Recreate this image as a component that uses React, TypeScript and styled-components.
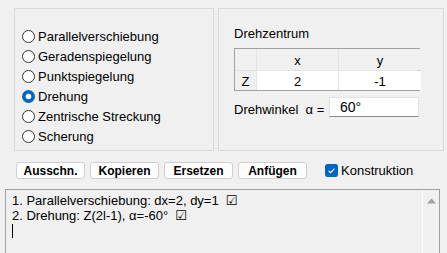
import React from "react";
import styled, { createGlobalStyle } from "styled-components";

const GlobalStyle = createGlobalStyle`
  html, body {
    margin: 0;
    padding: 0;
    background: #f0f0f0;
  }
  body {
    font-family: "Liberation Sans", Arial, sans-serif;
    font-size: 13px;
    color: #000;
  }
`;

const Page = styled.div`
  width: 447px;
  height: 253px;
  overflow: hidden;
  background: #f0f0f0;
  padding-top: 8px;
  box-sizing: border-box;
`;

const TopRow = styled.div`
  display: flex;
  gap: 4px;
  padding-left: 14px;
`;

const Panel = styled.div<{ $width: number }>`
  width: ${({ $width }) => $width}px;
  height: 143px;
  box-sizing: border-box;
  border: 1px solid #dadada;
`;

const RadioList = styled.div`
  display: flex;
  flex-direction: column;
  padding: 17px 0 0 7px;
`;

const RadioRow = styled.label`
  display: flex;
  align-items: center;
  gap: 3px;
  height: 20px;
  line-height: 15px;
`;

const RightInner = styled.div`
  display: flex;
  flex-direction: column;
  padding: 17px 0 0 15px;
`;

const Caption = styled.div`
  line-height: 15px;
  height: 15px;
`;

const Table = styled.div`
  margin-top: 7px;
  width: 186px;
  box-sizing: border-box;
  border: 1px solid #a0a0a0;
  display: grid;
  grid-template-columns: 21px 81px 82px;
  grid-template-rows: 21px 19px;
  background: #e3e3e3;
  gap: 1px 1px;
`;

const Cell = styled.div<{ $head?: boolean }>`
  background: ${({ $head }) => ($head ? "#f0f0f0" : "#ffffff")};
  display: flex;
  align-items: center;
  justify-content: center;
  font-size: 13px;
  padding-top: 1px;
`;

const AngleRow = styled.div`
  display: flex;
  align-items: center;
  margin-top: 6px;
`;

const AngleLabel = styled.span`
  width: 95px;
  white-space: pre;
  padding-top: 5px;
`;

const AngleInput = styled.div`
  width: 90px;
  height: 20px;
  box-sizing: border-box;
  background: #fff;
  border: 1px solid #e2e2e2;
  border-bottom: 1px solid #8c8c8c;
  padding-left: 10px;
  line-height: 18px;
  font-size: 14px;
`;

const ButtonRow = styled.div`
  display: flex;
  align-items: center;
  margin-top: 11px;
  padding-left: 16px;
  gap: 5px;
`;

const Button = styled.div`
  width: 69px;
  height: 17px;
  box-sizing: border-box;
  background: #fdfdfd;
  border: 1px solid #d0d0d0;
  border-radius: 3px;
  font-weight: bold;
  font-size: 12px;
  display: flex;
  align-items: center;
  justify-content: center;
`;

const CheckLabel = styled.label`
  display: flex;
  align-items: center;
  gap: 3px;
  margin-left: 13px;
`;

const Editor = styled.div`
  margin: 10px 0 0 5px;
  width: 435px;
  height: 80px;
  box-sizing: border-box;
  border: 1px solid #9f9f9f;
  border-bottom: none;
  display: flex;
  background: #f0f0f0;
`;

const EditorText = styled.div`
  flex: 1;
  padding: 3px 0 0 6px;
  line-height: 15px;
  font-size: 13px;
`;

const Line = styled.div`
  white-space: pre;
`;

const Tick = styled.span`
  font-family: "DejaVu Sans", sans-serif;
  font-size: 13px;
  margin-left: 7px;
`;

const Caret = styled.div`
  width: 1px;
  height: 14px;
  margin-top: 1px;
  background: #000;
`;

const Scrollbar = styled.div`
  width: 16px;
  border-left: 1px solid #fbfbfb;
  display: flex;
  justify-content: center;
  padding-top: 8px;
`;

const Radio = ({ checked }: { checked?: boolean }) => (
  <svg width="13" height="13" viewBox="0 0 13 13">
    {checked ? (
      <>
        <circle cx="6.5" cy="6.5" r="6.5" fill="#0067c0" />
        <circle cx="6.5" cy="6.5" r="2.8" fill="#fff" />
      </>
    ) : (
      <circle cx="6.5" cy="6.5" r="6" fill="#fff" stroke="#333" strokeWidth="1" />
    )}
  </svg>
);

const options = [
  "Parallelverschiebung",
  "Geradenspiegelung",
  "Punktspiegelung",
  "Drehung",
  "Zentrische Streckung",
  "Scherung",
];

export default function App() {
  return (
    <Page>
      <GlobalStyle />
      <TopRow>
        <Panel $width={200}>
          <RadioList>
            {options.map((o) => (
              <RadioRow key={o}>
                <Radio checked={o === "Drehung"} />
                {o}
              </RadioRow>
            ))}
          </RadioList>
        </Panel>
        <Panel $width={226}>
          <RightInner>
            <Caption>Drehzentrum</Caption>
            <Table>
              <Cell $head />
              <Cell $head>x</Cell>
              <Cell $head>y</Cell>
              <Cell $head>Z</Cell>
              <Cell>2</Cell>
              <Cell>-1</Cell>
            </Table>
            <AngleRow>
              <AngleLabel>{"Drehwinkel  α ="}</AngleLabel>
              <AngleInput>60°</AngleInput>
            </AngleRow>
          </RightInner>
        </Panel>
      </TopRow>
      <ButtonRow>
        <Button>Ausschn.</Button>
        <Button>Kopieren</Button>
        <Button>Ersetzen</Button>
        <Button>Anfügen</Button>
        <CheckLabel>
          <svg width="13" height="13" viewBox="0 0 13 13">
            <rect x="0" y="0" width="13" height="13" rx="2.5" fill="#0067c0" />
            <path d="M3.6 6.8 L5.6 8.7 L9.4 4.6" fill="none" stroke="#fff" strokeWidth="1.1" />
          </svg>
          Konstruktion
        </CheckLabel>
      </ButtonRow>
      <Editor>
        <EditorText>
          <Line>
            1. Parallelverschiebung: dx=2, dy=1<Tick>☑</Tick>
          </Line>
          <Line>
            2. Drehung: Z(2l-1), α=-60°<Tick>☑</Tick>
          </Line>
          <Caret />
        </EditorText>
        <Scrollbar>
          <svg width="9" height="6" viewBox="0 0 9 6">
            <path d="M0 5.5 L4.5 0.5 L9 5.5 Z" fill="#a0a0a0" />
          </svg>
        </Scrollbar>
      </Editor>
    </Page>
  );
}
